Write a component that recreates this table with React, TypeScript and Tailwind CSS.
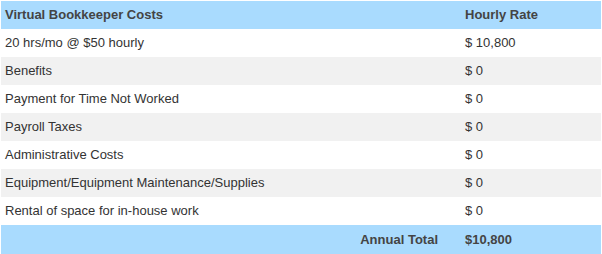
import React from 'react';

type Row = {
  label: string;
  amount: string;
};

const rows: Row[] = [
  { label: "20 hrs/mo @ $50 hourly", amount: "$ 10,800" },
  { label: "Benefits", amount: "$ 0" },
  { label: "Payment for Time Not Worked", amount: "$ 0" },
  { label: "Payroll Taxes", amount: "$ 0" },
  { label: "Administrative Costs", amount: "$ 0" },
  { label: "Equipment/Equipment Maintenance/Supplies", amount: "$ 0" },
  { label: "Rental of space for in-house work", amount: "$ 0" }
];

const App = () => {
  return (
    <div className="w-[602px] h-[254px] bg-white p-px font-['Liberation_Sans',Arial,sans-serif] text-[13px] text-[#333]">
      <table className="w-[600px] border-collapse">
        <thead>
          <tr className="h-[28px] bg-[#a9dbfe] text-[#444]">
            <th className="pl-[4px] text-left font-bold">Virtual Bookkeeper Costs</th>
            <th className="w-[141px] pl-[5px] text-left font-bold">Hourly Rate</th>
          </tr>
        </thead>
        <tbody>
          {rows.map((row, i) => (
            <tr key={row.label} className={`h-[28px] ${i % 2 === 1 ? 'bg-[#f1f1f1]' : 'bg-white'}`}>
              <td className="pl-[4px]">{row.label}</td>
              <td className="pl-[5px]">{row.amount}</td>
            </tr>
          ))}
          {/* Total */}
          <tr className="h-[29px] bg-[#a9dbfe] text-[#444] font-bold">
            <td className="pr-[22px] text-right">Annual Total</td>
            <td className="pl-[5px]">$10,800</td>
          </tr>
        </tbody>
      </table>
    </div>
  );
};

export default App;
